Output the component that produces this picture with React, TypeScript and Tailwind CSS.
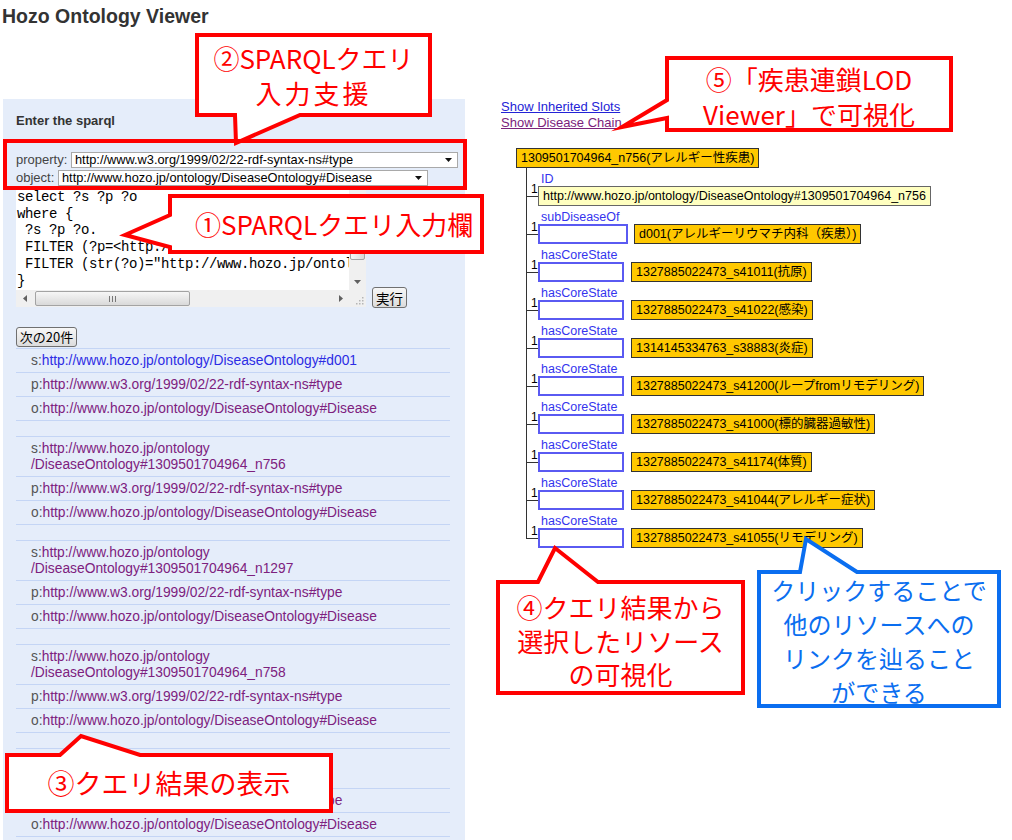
import React from 'react';

const P_URI = 'http://www.w3.org/1999/02/22-rdf-syntax-ns#type';
const O_URI = 'http://www.hozo.jp/ontology/DiseaseOntology#Disease';

interface Group {
  s: string[];
  fresh?: boolean;
}

const groups: Group[] = [
  { s: ['http://www.hozo.jp/ontology/DiseaseOntology#d001'], fresh: true },
  { s: ['http://www.hozo.jp/ontology', '/DiseaseOntology#1309501704964_n756'] },
  { s: ['http://www.hozo.jp/ontology', '/DiseaseOntology#1309501704964_n1297'] },
  { s: ['http://www.hozo.jp/ontology', '/DiseaseOntology#1309501704964_n758'] },
  { s: ['http://www.hozo.jp/ontology', '/DiseaseOntology#1309501704964_n759'] },
];

interface Slot {
  label: string;
  value: string;
  id?: boolean;
  wide?: boolean;
}

const slots: Slot[] = [
  { label: 'ID', value: 'http://www.hozo.jp/ontology/DiseaseOntology#1309501704964_n756', id: true },
  { label: 'subDiseaseOf', value: 'd001(アレルギーリウマチ内科（疾患）)', wide: true },
  { label: 'hasCoreState', value: '1327885022473_s41011(抗原)' },
  { label: 'hasCoreState', value: '1327885022473_s41022(感染)' },
  { label: 'hasCoreState', value: '1314145334763_s38883(炎症)' },
  { label: 'hasCoreState', value: '1327885022473_s41200(ループfromリモデリング)' },
  { label: 'hasCoreState', value: '1327885022473_s41000(標的臓器過敏性)' },
  { label: 'hasCoreState', value: '1327885022473_s41174(体質)' },
  { label: 'hasCoreState', value: '1327885022473_s41044(アレルギー症状)' },
  { label: 'hasCoreState', value: '1327885022473_s41055(リモデリング)' },
];

const code = `select ?s ?p ?o
where {
 ?s ?p ?o.
 FILTER (?p=<http://www.w3.org/1999/02/22-rdf-syntax-ns#type>)
 FILTER (str(?o)="http://www.hozo.jp/ontology/DiseaseOntology#Disease")
}`;

// small scrollbar / select arrows
const Tri = ({ dir, fill = '#606060' }: { dir: 'up' | 'down' | 'left' | 'right'; fill?: string }) => {
  const vertical = dir === 'up' || dir === 'down';
  const w = vertical ? 7 : 4;
  const h = vertical ? 4 : 7;
  const pts = {
    up: '0,4 3.5,0 7,4',
    down: '0,0 7,0 3.5,4',
    left: '4,0 4,7 0,3.5',
    right: '0,0 0,7 4,3.5',
  }[dir];
  return (
    <svg width={w} height={h} viewBox={`0 0 ${w} ${h}`}>
      <polygon points={pts} fill={fill} />
    </svg>
  );
};

const FakeSelect = ({ text, width }: { text: string; width: string }) => (
  <div className={`${width} flex h-[16px] items-center justify-between border border-[#a9a9a9] bg-white pl-[3px] pr-[5px] text-[12.8px] leading-[14px] text-black whitespace-nowrap overflow-hidden`}>
    <span>{text}</span>
    <Tri dir="down" fill="#111" />
  </div>
);

const QueryBox = () => (
  <div className="flex h-[119px] w-[350px] flex-col bg-white">
    <div className="flex min-h-0 flex-1">
      <pre className="flex-1 overflow-hidden whitespace-pre pl-[1px] pt-[1px] font-['Liberation_Mono',monospace] text-[14px] leading-[16.7px] tracking-[-0.4px] text-black">
        {code}
      </pre>
      <div className="flex w-[17px] flex-col bg-[#f0f0f0]">
        <div className="flex h-[17px] items-center justify-center">
          <Tri dir="up" />
        </div>
        <div className="mx-[1px] h-[55px] rounded-[2px] border border-[#a3a3a3] bg-linear-to-r from-[#f6f6f6] to-[#d9d9d9]" />
        <div className="flex-1" />
        <div className="flex h-[17px] items-center justify-center">
          <Tri dir="down" />
        </div>
      </div>
    </div>
    <div className="flex h-[17px]">
      <div className="flex flex-1 items-center bg-[#f0f0f0]">
        <div className="flex w-[17px] justify-center">
          <Tri dir="left" />
        </div>
        <div className="ml-[2px] flex h-[15px] w-[155px] items-center justify-center rounded-[2px] border border-[#a3a3a3] bg-linear-to-b from-[#f6f6f6] to-[#d9d9d9]">
          <svg width="7" height="6" viewBox="0 0 7 6">
            <path d="M0.5 0V6M3.5 0V6M6.5 0V6" stroke="#777" strokeWidth="1" />
          </svg>
        </div>
        <div className="flex-1" />
        <div className="flex w-[17px] justify-center">
          <Tri dir="right" />
        </div>
      </div>
      <div className="flex w-[17px] items-end justify-end bg-[#f0f0f0] p-[2px]">
        <svg width="9" height="9" viewBox="0 0 9 9">
          <g fill="#b5b5b5">
            <rect x="7" y="1" width="1.5" height="1.5" />
            <rect x="4" y="4" width="1.5" height="1.5" />
            <rect x="7" y="4" width="1.5" height="1.5" />
            <rect x="1" y="7" width="1.5" height="1.5" />
            <rect x="4" y="7" width="1.5" height="1.5" />
            <rect x="7" y="7" width="1.5" height="1.5" />
          </g>
        </svg>
      </div>
    </div>
  </div>
);

const btn =
  "rounded-[3px] border border-[#707070] bg-linear-to-b from-[#f7f7f7] to-[#dcdcdc] font-['Noto_Sans_CJK_JP',sans-serif] leading-[18px] text-black whitespace-nowrap";

const ResultRow = ({ prefix, lines, fresh }: { prefix: string; lines: string[]; fresh?: boolean }) => {
  const double = lines.length > 1;
  return (
    <div
      className={`border-b border-[#c4d5f5] pl-[15px] text-[13.8px] whitespace-nowrap ${
        double ? 'pt-[4px] pb-[3px] leading-[16px]' : 'h-[24px] leading-[23px]'
      }`}
    >
      <span className="text-[#555]">{prefix}:</span>
      <span className={fresh ? 'text-[#2c2ce4]' : 'text-[#7d217e]'}>
        {lines.map((l, i) => (
          <React.Fragment key={i}>
            {i > 0 && <br />}
            {l}
          </React.Fragment>
        ))}
      </span>
    </div>
  );
};

const LeftPanel = () => (
  <div className="ml-[3px] h-[741px] w-[462px] overflow-hidden bg-[#e5edfa] pl-[13px] pt-[14px]">
    <div className="text-[13px] font-bold leading-[16px] text-[#333]">Enter the sparql</div>

    <div className="mt-[23px] flex h-[16px] items-center">
      <span className="w-[55px] text-[13px] leading-[16px] text-[#444]">property:</span>
      <FakeSelect text={P_URI} width="w-[387px]" />
    </div>
    <div className="mt-[2px] flex h-[16px] items-center">
      <span className="w-[42px] text-[13px] leading-[16px] text-[#444]">object:</span>
      <FakeSelect text={O_URI} width="w-[370px]" />
    </div>

    <div className="mt-[2px] flex items-end">
      <QueryBox />
      <button className={`${btn} mb-[-1px] ml-[6px] h-[21px] w-[35px] text-[13.5px]`}>実行</button>
    </div>

    <button className={`${btn} mt-[20px] flex h-[20px] w-[61px] items-center justify-center text-[13px]`}>次の20件</button>

    <div className="mt-[1px] w-[434px] border-t border-[#c4d5f5]">
      {groups.map((g, i) => (
        <React.Fragment key={i}>
          <ResultRow prefix="s" lines={g.s} fresh={g.fresh} />
          <ResultRow prefix="p" lines={[P_URI]} />
          <ResultRow prefix="o" lines={[O_URI]} />
          <div className="h-[16px] border-b border-[#c4d5f5]" />
        </React.Fragment>
      ))}
    </div>
  </div>
);

const SlotRow = ({ slot }: { slot: Slot }) => (
  <div className="pl-[12px]">
    <div className="h-[13px] pl-[3px] text-[12.5px] leading-[13px] text-[#3434ee]">{slot.label}</div>
    <div className="relative flex h-[20px] items-center">
      <div className="absolute left-[-12px] top-[10px] h-px w-[12px] bg-[#333]" />
      <span className="absolute left-[-7px] top-[-3px] text-[12px] leading-[12px] text-black">1</span>
      {slot.id ? (
        <div className="flex h-[20px] items-center border border-[#666] bg-[#ffffc0] px-[4px] text-[12.5px] whitespace-nowrap text-black">
          {slot.value}
        </div>
      ) : (
        <>
          <div className={`h-[20px] border-2 border-[#5a5af2] bg-white ${slot.wide ? 'w-[90px]' : 'w-[86px]'}`} />
          <div
            className={`flex h-[20px] items-center border border-[#333] bg-[#ffc800] px-[4px] text-[12.5px] whitespace-nowrap text-black ${
              slot.wide ? 'ml-[6px]' : 'ml-[7px]'
            }`}
          >
            {slot.value}
          </div>
        </>
      )}
    </div>
  </div>
);

const RightPane = () => (
  <div className="ml-[36px] w-[500px]">
    <div className="text-[13px] leading-[16px]">
      <div>
        <a className="text-[#2323d6] underline">Show Inherited Slots</a>
      </div>
      <div>
        <a className="text-[#7b237c] underline">Show Disease Chain</a>
      </div>
    </div>

    <div className="ml-[15px] mt-[17px]">
      <div className="flex h-[20px] w-fit items-center border border-[#333] bg-[#ffc800] px-[4px] text-[12.5px] whitespace-nowrap text-black">
        1309501704964_n756(アレルギー性疾患)
      </div>
      <div className="relative ml-[10px] flex flex-col gap-[5px] pt-[5px]">
        <div className="absolute bottom-[10px] left-0 top-0 w-px bg-[#333]" />
        {slots.map((s, i) => (
          <SlotRow key={i} slot={s} />
        ))}
      </div>
    </div>
  </div>
);

const RED = '#ff0000';
const BLUE = '#0a6ef0';

const calloutPaths = [
  { d: 'M197 35H430V115H300L236 143L235 115H197Z', c: RED },
  { d: 'M170 196H482V252H170V247L125 235L170 215Z', c: RED },
  { d: 'M667 58H951V130H667V118L622 127L667 100Z', c: RED },
  { d: 'M7 755H60L81 736L140 755H331V811H7Z', c: RED },
  { d: 'M498 582H538L555 548L598 582H743V693H498Z', c: RED },
  { d: 'M759 572H800L806 539L857 572H999V706H759Z', c: BLUE },
];

const cjk = "font-['Noto_Sans_CJK_JP',sans-serif]";

const Annotations = () => (
  <>
    <svg className="pointer-events-none absolute left-0 top-0" width="1012" height="840" viewBox="0 0 1012 840">
      {calloutPaths.map((p, i) => (
        <path key={i} d={p.d} fill="#fff" stroke={p.c} strokeWidth="4" strokeLinejoin="miter" strokeMiterlimit="10" />
      ))}
      <rect x="5" y="141" width="460" height="47" fill="none" stroke={RED} strokeWidth="4" />
    </svg>

    <div className={`${cjk} absolute left-[199px] top-[37px] flex h-[76px] w-[229px] flex-col items-center justify-center text-[26px] leading-[35px] text-[#ff0000]`}>
      <div>②SPARQLクエリ</div>
      <div className="tracking-[3px]">入力支援</div>
    </div>

    <div className={`${cjk} absolute left-[172px] top-[198px] flex h-[52px] w-[308px] items-center pl-[23px] text-[26px] leading-[30px] text-[#ff0000] whitespace-nowrap`}>
      ①SPARQLクエリ入力欄
    </div>

    <div className={`${cjk} absolute left-[669px] top-[60px] flex h-[70px] w-[280px] flex-col items-center justify-center pt-[2px] text-[26px] leading-[35px] text-[#ff0000] whitespace-nowrap`}>
      <div>⑤「疾患連鎖LOD</div>
      <div>Viewer」で可視化</div>
    </div>

    <div className={`${cjk} absolute left-[9px] top-[757px] flex h-[52px] w-[320px] items-center justify-center text-[27px] leading-[30px] text-[#ff0000] whitespace-nowrap`}>
      ③クエリ結果の表示
    </div>

    <div className={`${cjk} absolute left-[500px] top-[584px] flex h-[107px] w-[241px] flex-col items-center justify-center pt-[6px] text-[26px] leading-[33.5px] text-[#ff0000] whitespace-nowrap`}>
      <div>④クエリ結果から</div>
      <div>選択したリソース</div>
      <div>の可視化</div>
    </div>

    <div className={`${cjk} absolute left-[761px] top-[574px] flex h-[130px] w-[236px] flex-col items-center justify-center pt-[3px] text-[24px] leading-[34px] text-[#0a6ef0] whitespace-nowrap`}>
      <div>クリックすることで</div>
      <div>他のリソースへの</div>
      <div>リンクを辿ること</div>
      <div>ができる</div>
    </div>
  </>
);

export default function App() {
  return (
    <div className="relative h-[840px] w-[1012px] overflow-hidden bg-white font-['Liberation_Sans','Noto_Sans_CJK_JP',sans-serif] text-[#333]">
      <h1 className="pl-[2px] pt-[4px] text-[19.5px] font-bold leading-[24px] text-[#333]">Hozo Ontology Viewer</h1>
      <div className="mt-[71px] flex items-start">
        <LeftPanel />
        <RightPane />
      </div>
      <Annotations />
    </div>
  );
}
